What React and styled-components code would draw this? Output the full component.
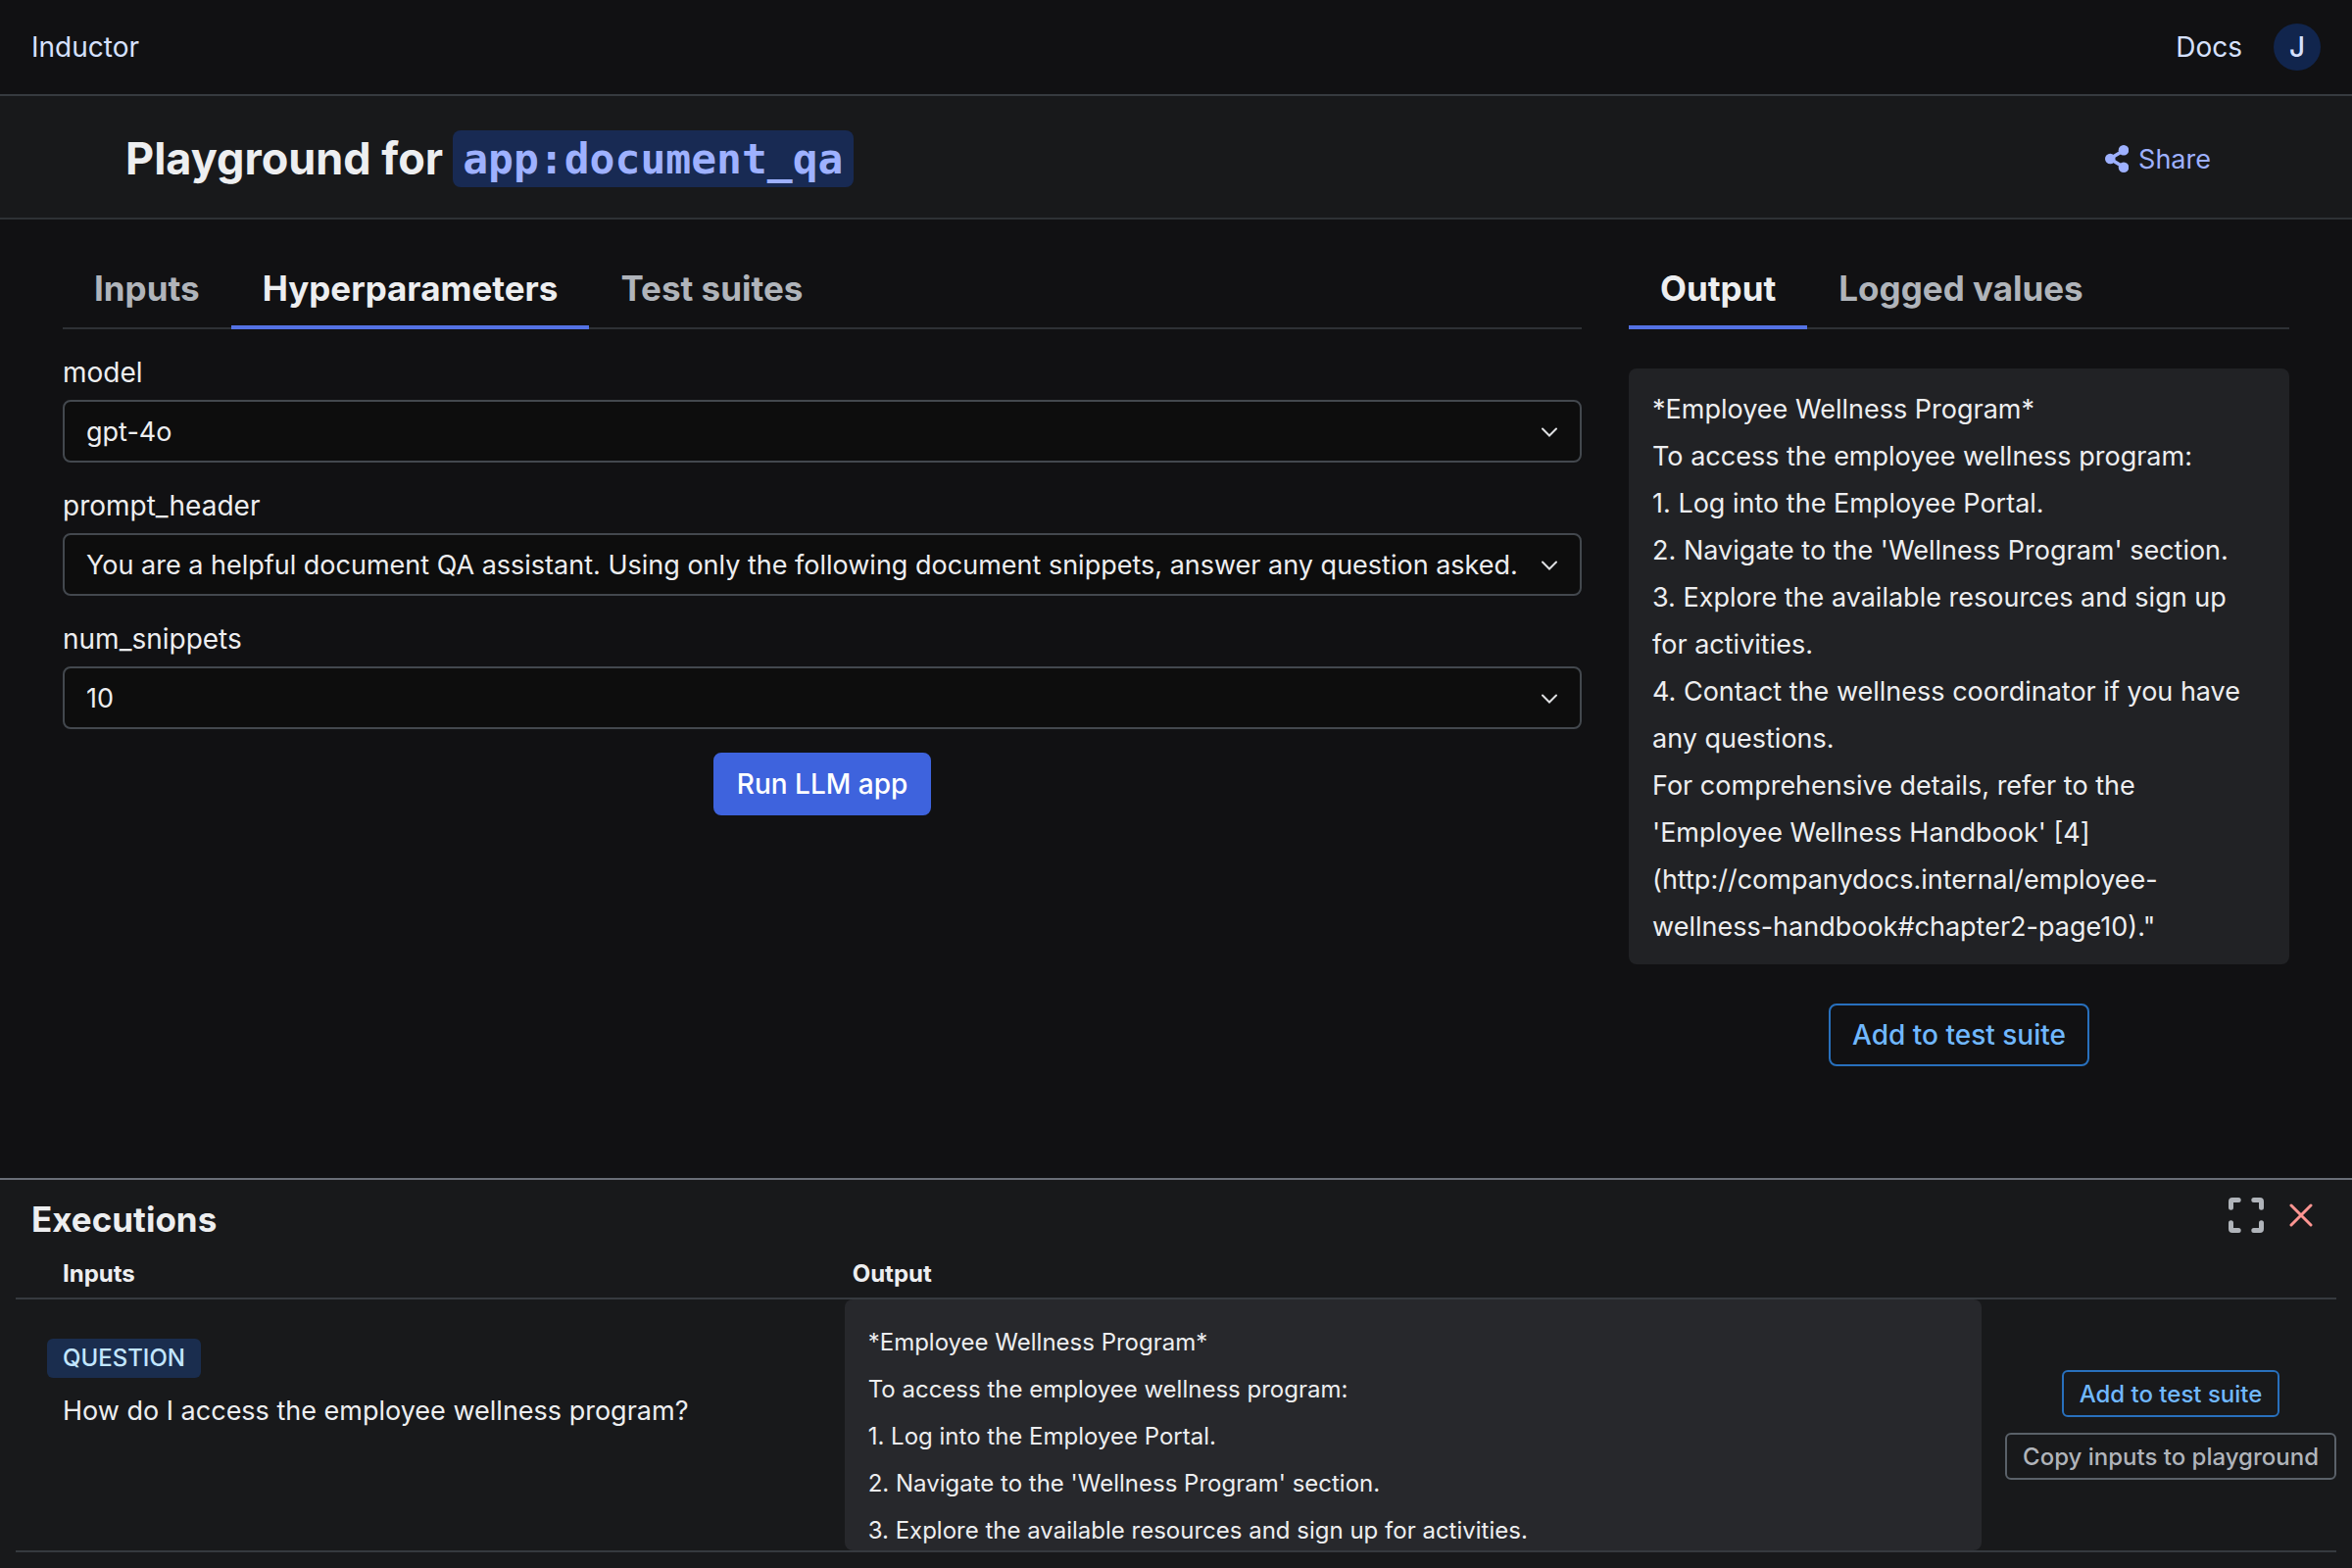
import { useState } from "react";
import styled, { createGlobalStyle } from "styled-components";

const GlobalStyle = createGlobalStyle`
  *, *::before, *::after {
    box-sizing: border-box;
  }

  body {
    margin: 0;
    background: #111113;
    color: #edeef0;
    font-family: Inter, "Liberation Sans", sans-serif;
    font-size: 28px;
    line-height: 40px;
  }

  button, select {
    font-family: inherit;
    font-size: inherit;
    color: inherit;
  }
`;

const Page = styled.div`
  display: flex;
  flex-direction: column;
  min-height: 100vh;
`;

const TopBar = styled.header`
  display: flex;
  align-items: center;
  justify-content: space-between;
  height: 98px;
  padding: 0 32px;
  border-bottom: 2px solid #363a3f;
`;

const TopNav = styled.nav`
  display: flex;
  align-items: center;
  gap: 32px;
`;

const TopLink = styled.a`
  color: #d6e1ff;
  text-decoration: none;
`;

const Avatar = styled.button`
  width: 48px;
  height: 48px;
  padding: 0;
  border: none;
  border-radius: 50%;
  background: #11254d;
  color: #d6e1ff;
  font-size: 28px;
  font-weight: 500;
`;

const TitleBar = styled.section`
  display: flex;
  align-items: center;
  justify-content: space-between;
  height: 126px;
  padding: 4px 144px 0 128px;
  border-bottom: 2px solid #2e3135;
  background: #18191b;
`;

const PageTitle = styled.h1`
  display: flex;
  align-items: center;
  gap: 10px;
  margin: 0;
  font-size: 45px;
  font-weight: 700;
  line-height: 58px;
`;

const AppName = styled.code`
  padding: 0 10px;
  border-radius: 8px;
  background: #182a53;
  color: #9eb1ff;
  font-family: "DejaVu Sans Mono", monospace;
  font-size: 43px;
`;

const ShareButton = styled.button`
  display: flex;
  align-items: center;
  gap: 10px;
  padding: 0;
  border: none;
  background: none;
  color: #9eb1ff;
  font-size: 27px;
`;

const Main = styled.main`
  display: grid;
  flex: 1;
  grid-template-columns: 2.3fr 1fr;
  align-items: start;
  gap: 48px;
  padding: 32px 64px;
`;

const TabList = styled.div`
  display: flex;
  height: 80px;
  box-shadow: inset 0 -2px #2e3135;
`;

const Tab = styled.button`
  padding: 0 32px 4px;
  border: none;
  background: none;
  color: ${({ $active }) => ($active ? "#edeef0" : "#b0b4ba")};
  box-shadow: ${({ $active }) => ($active ? "inset 0 -4px #5472e4" : "none")};
  font-size: 35px;
  font-weight: 700;
  white-space: nowrap;
`;

const Form = styled.form`
  display: flex;
  flex-direction: column;
  gap: 24px;
  padding-top: 24px;
`;

const Field = styled.div`
  display: flex;
  flex-direction: column;
  gap: 8px;
`;

const SelectWrap = styled.div`
  display: grid;
  align-items: center;

  > * {
    grid-area: 1 / 1;
  }

  svg {
    justify-self: end;
    margin-right: 24px;
    pointer-events: none;
  }
`;

const Select = styled.select`
  width: 100%;
  height: 64px;
  padding: 0 48px 0 22px;
  border: 2px solid #43484e;
  border-radius: 8px;
  background: #0d0d0d;
  font-size: 27px;
  appearance: none;
`;

const Button = styled.button`
  align-self: center;
  height: ${({ $small }) => ($small ? "48px" : "64px")};
  padding: ${({ $small }) => ($small ? "0 16px" : "0 22px")};
  border: 2px solid ${({ $border }) => $border};
  border-radius: ${({ $small }) => ($small ? "6px" : "8px")};
  background: ${({ $fill }) => $fill || "transparent"};
  color: ${({ $color }) => $color};
  font-size: ${({ $small }) => ($small ? "24px" : "28px")};
  font-weight: 500;
  white-space: nowrap;
`;

const OutputPanel = styled.section`
  display: flex;
  flex-direction: column;
  gap: 40px;
`;

const OutputBox = styled.div`
  padding: 18px 24px 14px;
  border-radius: 8px;
  background: #212225;
  font-size: 27px;
  line-height: 48px;
  white-space: pre-line;
`;

const Executions = styled.section`
  padding-bottom: 16px;
  border-top: 2px solid #696e77;
  background: #18191b;
`;

const ExecutionsHeader = styled.div`
  display: flex;
  justify-content: space-between;
  padding: 16px 32px 0;
`;

const ExecutionsTitle = styled.h2`
  margin: 0;
  font-size: 35px;
  font-weight: 700;
  line-height: 48px;
`;

const PanelActions = styled.div`
  display: flex;
  gap: 16px;
`;

const IconButton = styled.button`
  display: flex;
  align-items: center;
  justify-content: center;
  width: 40px;
  height: 40px;
  padding: 0;
  border: none;
  background: none;
  color: ${({ $color }) => $color};
`;

const TableWrap = styled.div`
  padding: 0 16px;
`;

const Table = styled.table`
  width: 100%;
  border-spacing: 0;
  table-layout: fixed;
`;

const HeadCell = styled.th`
  width: ${({ $width }) => $width};
  height: 58px;
  padding: ${({ $indent }) => `14px ${$indent} 6px`};
  border-bottom: 2px solid #363a3f;
  font-size: 24px;
  font-weight: 700;
  line-height: 36px;
  text-align: left;
`;

const Cell = styled.td`
  padding: 0;
  border-bottom: 2px solid #363a3f;
  vertical-align: ${({ $align }) => $align || "top"};
`;

const Question = styled.div`
  display: flex;
  flex-direction: column;
  align-items: flex-start;
  gap: 14px;
  padding: 40px 32px 0;
`;

const Badge = styled.span`
  padding: 0 16px;
  border-radius: 6px;
  background: #1a2d4e;
  color: #c2e6ff;
  font-size: 24px;
  font-weight: 500;
`;

const QuestionText = styled.p`
  margin: 0;
  padding: 0 16px;
  font-size: 27px;
`;

const ExecutionOutput = styled.div`
  height: 256px;
  padding: 20px 24px 0;
  border-radius: 8px;
  background: #27282c;
  font-size: 24px;
  line-height: 48px;
  white-space: pre-line;
`;

const RowActions = styled.div`
  display: flex;
  flex-direction: column;
  gap: 16px;
  padding-left: 24px;
`;

const output = `*Employee Wellness Program*
To access the employee wellness program:
1. Log into the Employee Portal.
2. Navigate to the 'Wellness Program' section.
3. Explore the available resources and sign up for activities.
4. Contact the wellness coordinator if you have any questions.
For comprehensive details, refer to the 'Employee Wellness Handbook' [4](http://companydocs.internal/employee-wellness-handbook#chapter2-page10)."`;

// The executions table only previews the first lines of an output.
const outputPreview = output.split("\n").slice(0, 5).join("\n");

const hyperparameters = [
  { name: "model", value: "gpt-4o" },
  {
    name: "prompt_header",
    value:
      "You are a helpful document QA assistant. Using only the following document snippets, answer any question asked.",
  },
  { name: "num_snippets", value: "10" },
];

function ShareIcon() {
  return (
    <svg width="24" height="28" viewBox="0 0 24 28" fill="currentColor" aria-hidden="true">
      <path d="M19 5.5 5 14l14 8.5" fill="none" stroke="currentColor" strokeWidth="3.6" />
      <circle cx="19" cy="5.3" r="5.3" />
      <circle cx="5.3" cy="14" r="5.3" />
      <circle cx="19" cy="22.7" r="5.3" />
    </svg>
  );
}

function ChevronIcon() {
  return (
    <svg width="18" height="12" viewBox="0 0 18 12" fill="none" aria-hidden="true">
      <path d="m2 3.5 7 7 7-7" stroke="#dfe0e2" strokeWidth="2" strokeLinecap="round" />
    </svg>
  );
}

function FullscreenIcon() {
  return (
    <svg width="36" height="36" viewBox="0 0 36 36" fill="none" aria-hidden="true">
      <path
        d="M2.5 10.2V4q0-1.5 1.5-1.5h6.2M25.8 2.5H32q1.5 0 1.5 1.5v6.2M33.5 25.8V32q0 1.5-1.5 1.5h-6.2M10.2 33.5H4q-1.5 0-1.5-1.5v-6.2"
        stroke="currentColor"
        strokeWidth="5"
        strokeLinecap="round"
      />
    </svg>
  );
}

function CloseIcon() {
  return (
    <svg width="24" height="24" viewBox="0 0 24 24" fill="none" aria-hidden="true">
      <path d="m2 2 20 20M22 2 2 22" stroke="currentColor" strokeWidth="3" strokeLinecap="round" />
    </svg>
  );
}

function Tabs({ names, active, onChange }) {
  return (
    <TabList role="tablist">
      {names.map((name) => (
        <Tab
          key={name}
          type="button"
          role="tab"
          aria-selected={name === active}
          $active={name === active}
          onClick={() => onChange(name)}
        >
          {name}
        </Tab>
      ))}
    </TabList>
  );
}

export default function App() {
  const [settingsTab, setSettingsTab] = useState("Hyperparameters");
  const [outputTab, setOutputTab] = useState("Output");

  return (
    <Page>
      <GlobalStyle />

      <TopBar>
        <TopLink href="#">Inductor</TopLink>
        <TopNav>
          <TopLink href="#docs">Docs</TopLink>
          <Avatar type="button">J</Avatar>
        </TopNav>
      </TopBar>

      <TitleBar>
        <PageTitle>
          Playground for <AppName>app:document_qa</AppName>
        </PageTitle>
        <ShareButton type="button">
          <ShareIcon />
          Share
        </ShareButton>
      </TitleBar>

      <Main>
        <section>
          <Tabs
            names={["Inputs", "Hyperparameters", "Test suites"]}
            active={settingsTab}
            onChange={setSettingsTab}
          />
          <Form onSubmit={(event) => event.preventDefault()}>
            {hyperparameters.map(({ name, value }) => (
              <Field key={name}>
                <label htmlFor={name}>{name}</label>
                <SelectWrap>
                  <Select id={name} name={name} defaultValue={value}>
                    <option>{value}</option>
                  </Select>
                  <ChevronIcon />
                </SelectWrap>
              </Field>
            ))}
            <Button type="submit" $fill="#3e63dd" $border="#3e63dd" $color="#ffffff">
              Run LLM app
            </Button>
          </Form>
        </section>

        <OutputPanel>
          <Tabs
            names={["Output", "Logged values"]}
            active={outputTab}
            onChange={setOutputTab}
          />
          <OutputBox>{output}</OutputBox>
          <Button type="button" $border="#2870bd" $color="#70b8ff">
            Add to test suite
          </Button>
        </OutputPanel>
      </Main>

      <Executions>
        <ExecutionsHeader>
          <ExecutionsTitle>Executions</ExecutionsTitle>
          <PanelActions>
            <IconButton type="button" aria-label="Fullscreen" $color="#b0b4ba">
              <FullscreenIcon />
            </IconButton>
            <IconButton type="button" aria-label="Close" $color="#ff9592">
              <CloseIcon />
            </IconButton>
          </PanelActions>
        </ExecutionsHeader>
        <TableWrap>
          <Table>
            <thead>
              <tr>
                <HeadCell $indent="48px">Inputs</HeadCell>
                <HeadCell $indent="8px" $width="49%">
                  Output
                </HeadCell>
                <HeadCell $indent="0" $width="362px" aria-label="Actions" />
              </tr>
            </thead>
            <tbody>
              <tr>
                <Cell>
                  <Question>
                    <Badge>QUESTION</Badge>
                    <QuestionText>How do I access the employee wellness program?</QuestionText>
                  </Question>
                </Cell>
                <Cell>
                  <ExecutionOutput>{outputPreview}</ExecutionOutput>
                </Cell>
                <Cell $align="middle">
                  <RowActions>
                    <Button type="button" $small $border="#2870bd" $color="#70b8ff">
                      Add to test suite
                    </Button>
                    <Button type="button" $small $border="#5a6169" $color="#b0b4ba">
                      Copy inputs to playground
                    </Button>
                  </RowActions>
                </Cell>
              </tr>
            </tbody>
          </Table>
        </TableWrap>
      </Executions>
    </Page>
  );
}
